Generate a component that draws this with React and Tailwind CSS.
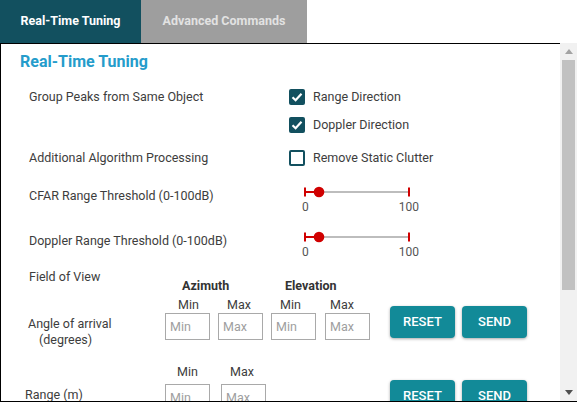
import React from 'react';

const CheckBox = ({ checked, label }) => (
  <div className="flex items-center h-[28px]">
    {checked ? (
      <span className="w-[16px] h-[16px] rounded-[2px] bg-[#12505f] flex items-center justify-center">
        <svg width="16" height="16" viewBox="0 0 16 16">
          <polyline points="3.5,8.2 6.6,11.2 12.5,4.8" fill="none" stroke="#fff" strokeWidth="2.2" />
        </svg>
      </span>
    ) : (
      <span className="w-[16px] h-[16px] rounded-[2px] border-2 border-[#12505f] bg-white" />
    )}
    <span className="ml-[8px]">{label}</span>
  </div>
);

const Slider = () => (
  <div className="ml-[12px] pt-[4px]">
    <svg width="120" height="12" viewBox="0 0 120 12" className="block">
      <line x1="18" y1="6" x2="108" y2="6" stroke="#bdbdbd" strokeWidth="2" />
      <line x1="4" y1="6" x2="18" y2="6" stroke="#d00000" strokeWidth="2" />
      <line x1="4" y1="1.5" x2="4" y2="10.5" stroke="#d00000" strokeWidth="2" />
      <line x1="108" y1="1.5" x2="108" y2="10.5" stroke="#d00000" strokeWidth="2" />
      <circle cx="18" cy="6" r="5.3" fill="#d00000" />
    </svg>
    <div className="w-[118px] flex justify-between pl-[1px] mt-[2px] text-[12px] leading-[14px] text-[#555]">
      <span>0</span>
      <span>100</span>
    </div>
  </div>
);

const Field = ({ placeholder }) => (
  <input
    placeholder={placeholder}
    className="w-[45px] h-[27px] border border-[#a9a9a9] px-[4px] text-[12.5px] text-[#333] placeholder:text-[#9e9e9e] outline-none bg-white"
  />
);

const Buttons = ({ className }) => (
  <div className={`flex gap-[7px] ${className}`}>
    <button className="w-[65px] h-[32px] rounded-[4px] bg-[#128a98] text-white text-[13px] font-medium shadow-[0_1px_3px_rgba(0,0,0,0.35)]">
      RESET
    </button>
    <button className="w-[65px] h-[32px] rounded-[4px] bg-[#128a98] text-white text-[13px] font-medium shadow-[0_1px_3px_rgba(0,0,0,0.35)]">
      SEND
    </button>
  </div>
);

const App = () => {
  return (
    <div className="w-[580px] h-[404px] bg-white font-['Roboto',sans-serif] text-[12.5px] text-[#3d3d3d]">
      <div className="flex h-[43px]">
        <div className="w-[141px] bg-[#12505f] flex items-center justify-center text-white font-bold text-[12.5px]">
          Real-Time Tuning
        </div>
        <div className="w-[166px] bg-[#9e9e9e] flex items-center justify-center text-[#e2e2e2] font-bold text-[12.5px]">
          Advanced Commands
        </div>
      </div>

      <div className="flex w-[577px] h-[359px] border-l border-b border-black">
        <div className="flex-1 border-t border-black overflow-hidden">
          <div className="pt-[8px] pl-[19px] text-[16px] leading-[20px] font-bold text-[#259ccb]">
            Real-Time Tuning
          </div>

          <div className="pl-[28px]">
            <div className="flex mt-[11px]">
              <div className="w-[260px] h-[28px] flex items-center">Group Peaks from Same Object</div>
              <div>
                <CheckBox checked label="Range Direction" />
                <CheckBox checked label="Doppler Direction" />
              </div>
            </div>

            <div className="flex mt-[5px]">
              <div className="w-[260px] h-[28px] flex items-center">Additional Algorithm Processing</div>
              <CheckBox label="Remove Static Clutter" />
            </div>

            <div className="flex mt-[10px] h-[45px]">
              <div className="w-[260px] h-[28px] flex items-center">CFAR Range Threshold (0-100dB)</div>
              <Slider />
            </div>

            <div className="flex h-[40px]">
              <div className="w-[260px] h-[28px] flex items-center">Doppler Range Threshold (0-100dB)</div>
              <Slider />
            </div>
          </div>

          <div className="flex mt-[2px] pl-[28px]">
            <div className="w-[136px] leading-[16px]">
              <div>Field of View</div>
              <div className="mt-[31px] -ml-[1px]">Angle of arrival</div>
              <div className="pl-[10px]">(degrees)</div>
            </div>
            <div className="pt-[9px]">
              <div className="flex font-bold leading-[16px] text-[#333]">
                <div className="w-[106px] pl-[17px]">Azimuth</div>
                <div className="pl-[14px]">Elevation</div>
              </div>
              <div className="flex mt-[3px] leading-[16px]">
                <div className="w-[53px] pl-[13px]">Min</div>
                <div className="w-[53px] pl-[9px]">Max</div>
                <div className="w-[54px] pl-[9px]">Min</div>
                <div className="pl-[5px]">Max</div>
              </div>
              <div className="flex">
                <Field placeholder="Min" />
                <div className="ml-[8px]"><Field placeholder="Max" /></div>
                <div className="ml-[8px]"><Field placeholder="Min" /></div>
                <div className="ml-[9px]"><Field placeholder="Max" /></div>
              </div>
            </div>
            <Buttons className="ml-[20px] mt-[37px] self-start" />
          </div>

          <div className="flex mt-[16px] pl-[24px]">
            <div className="w-[140px] leading-[16px] pt-[23px]">Range (m)</div>
            <div>
              <div className="flex leading-[16px]">
                <div className="w-[56px] pl-[12px]">Min</div>
                <div className="pl-[9px]">Max</div>
              </div>
              <div className="flex mt-[4px]">
                <Field placeholder="Min" />
                <div className="ml-[11px]"><Field placeholder="Max" /></div>
              </div>
            </div>
            <Buttons className="ml-[124px] mt-[16px] self-start" />
          </div>
        </div>

        <div className="w-[17px] bg-[#f1f1f1] flex flex-col items-center">
          <div className="h-[17px] flex items-center justify-center">
            <svg width="8" height="5" viewBox="0 0 8 5"><polygon points="0,5 4,0 8,5" fill="#a3a3a3" /></svg>
          </div>
          <div className="w-[13px] h-[230px] bg-[#c1c1c1]" />
          <div className="flex-1" />
          <div className="h-[17px] flex items-center justify-center">
            <svg width="8" height="5" viewBox="0 0 8 5"><polygon points="0,0 8,0 4,5" fill="#505050" /></svg>
          </div>
        </div>
      </div>
    </div>
  );
};

export default App;
